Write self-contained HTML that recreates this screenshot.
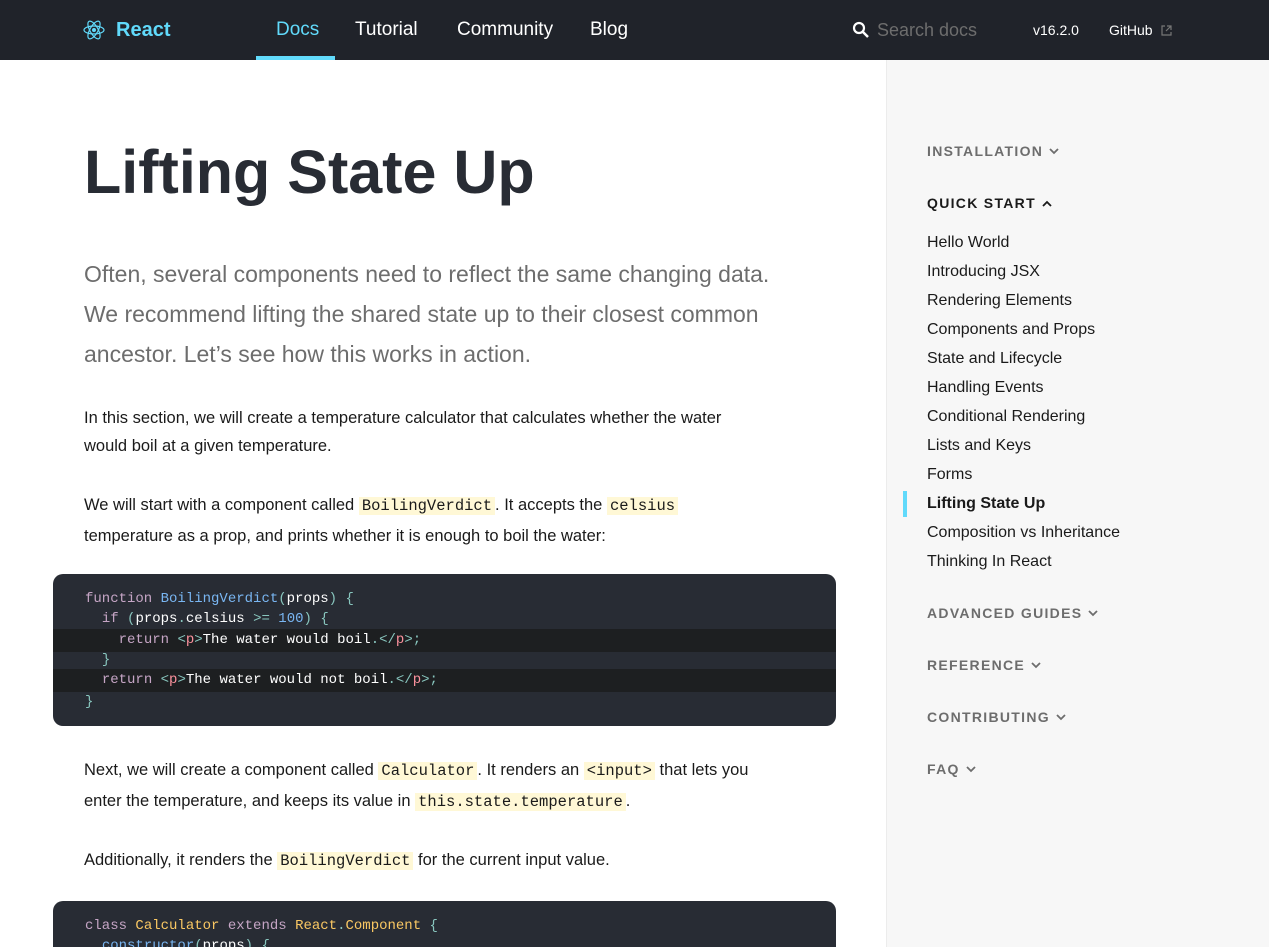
<!DOCTYPE html>
<html style="height:947px;overflow:hidden"><head><meta charset="utf-8"><style>
*{margin:0;padding:0;box-sizing:border-box}
body{width:1269px;height:947px;overflow:hidden;background:#fff;font-family:"Liberation Sans",sans-serif;position:relative}
.hdr{position:absolute;left:0;top:0;width:1269px;height:60px;background:#20232a}
.hdr .t{position:absolute;top:0;height:60px;line-height:60px;font-size:19px;color:#fff}
.side{position:absolute;left:886px;top:60px;width:383px;height:887px;background:#f7f7f7;border-left:1px solid #ececec}
.sh{position:absolute;left:40px;font-size:14px;font-weight:bold;letter-spacing:1.3px;color:#6d6d6d}
.sh svg{margin-left:6px;vertical-align:1px}
.si{position:absolute;left:40px;font-size:16px;color:#1a1a1a}
.p{position:absolute;left:84px;font-size:16.5px;color:#1a1a1a;line-height:28px}
code.i{font-family:"Liberation Mono",monospace;background:#fff8d6;color:#1a1a1a;font-size:15.5px;padding:0 3px}
.code{position:absolute;left:53px;width:783px;background:#282c34;border-radius:10px;font-family:"Liberation Mono",monospace;font-size:14px;color:#fff;overflow:hidden}
.code div{height:20px;line-height:20px;padding-left:32px;white-space:pre}
.hl{background:#1d1f21}
.k{color:#c5a5c5}.f{color:#79b6f2}.pu{color:#88c6be}.n{color:#79b6f2}.tg{color:#fc929e}.cl{color:#fac863}
</style></head><body>
<div class="hdr">
 <svg style="position:absolute;left:83px;top:19px" width="22" height="22" viewBox="-11 -11 22 22"><g fill="none" stroke="#61dafb" stroke-width="1.2"><ellipse rx="10" ry="4"/><ellipse rx="10" ry="4" transform="rotate(60)"/><ellipse rx="10" ry="4" transform="rotate(120)"/></g><circle r="2" fill="#61dafb"/></svg>
 <div class="t" style="left:116px;color:#61dafb;font-weight:bold;font-size:20px">React</div>
 <div class="t" style="left:276px;color:#61dafb">Docs</div>
 <div style="position:absolute;left:256px;top:56px;width:79px;height:4px;background:#61dafb"></div>
 <div class="t" style="left:355px">Tutorial</div>
 <div class="t" style="left:457px">Community</div>
 <div class="t" style="left:590px">Blog</div>
 <svg style="position:absolute;left:852px;top:21px" width="18" height="18" viewBox="0 0 18 18"><circle cx="7" cy="7" r="5" fill="none" stroke="#fff" stroke-width="2.2"/><path d="M11 11l5 5" stroke="#fff" stroke-width="2.5"/></svg>
 <div class="t" style="left:877px;color:#6d6d6d;font-size:18px">Search docs</div>
 <div class="t" style="left:1033px;font-size:14px">v16.2.0</div>
 <div class="t" style="left:1109px;font-size:14px">GitHub</div>
 <svg style="position:absolute;left:1161px;top:25px" width="11" height="11" viewBox="0 0 11 11"><path d="M4 1H1v9h9V7M6 1h4v4M10 1L5 6" fill="none" stroke="#777" stroke-width="1.2"/></svg>
</div>
<div style="position:absolute;left:84px;top:137px;font-size:61px;font-weight:bold;color:#282c34">Lifting State Up</div>
<div style="position:absolute;left:84px;top:254px;width:725px;font-size:23px;line-height:40px;color:#6d6d6d">Often, several components need to reflect the same changing data. We recommend lifting the shared state up to their closest common ancestor. Let’s see how this works in action.</div>
<div class="p" style="top:404px">In this section, we will create a temperature calculator that calculates whether the water<br>would boil at a given temperature.</div>
<div class="p" style="top:490px;line-height:30px">We will start with a component called <code class="i">BoilingVerdict</code>. It accepts the <code class="i">celsius</code><br>temperature as a prop, and prints whether it is enough to boil the water:</div>
<div class="code" style="top:574px;height:152px;padding-top:15px">
<div><span class="k">function</span> <span class="f">BoilingVerdict</span><span class="pu">(</span>props<span class="pu">) {</span></div>
<div>  <span class="k">if</span> <span class="pu">(</span>props<span class="pu">.</span>celsius <span class="pu">&gt;=</span> <span class="n">100</span><span class="pu">) {</span></div>
<div class="hl" style="height:23px;line-height:23px">    <span class="k">return</span> <span class="pu">&lt;</span><span class="tg">p</span><span class="pu">&gt;</span>The water would boil<span class="pu">.&lt;/</span><span class="tg">p</span><span class="pu">&gt;;</span></div>
<div style="height:17px;line-height:17px">  <span class="pu">}</span></div>
<div class="hl" style="height:23px;line-height:23px">  <span class="k">return</span> <span class="pu">&lt;</span><span class="tg">p</span><span class="pu">&gt;</span>The water would not boil<span class="pu">.&lt;/</span><span class="tg">p</span><span class="pu">&gt;;</span></div>
<div><span class="pu">}</span></div>
</div>
<div class="p" style="top:755px;line-height:30px">Next, we will create a component called <code class="i">Calculator</code>. It renders an <code class="i">&lt;input&gt;</code> that lets you<br>enter the temperature, and keeps its value in <code class="i">this.state.temperature</code>.</div>
<div class="p" style="top:845px;line-height:30px">Additionally, it renders the <code class="i">BoilingVerdict</code> for the current input value.</div>
<div class="code" style="top:901px;height:46px;padding-top:15px;border-radius:10px 10px 0 0">
<div><span class="k">class</span> <span class="cl">Calculator</span> <span class="k">extends</span> <span class="cl">React</span><span class="pu">.</span><span class="cl">Component</span> <span class="pu">{</span></div>
<div>  <span class="f">constructor</span><span class="pu">(</span>props<span class="pu">) {</span></div>
</div>
<div class="side">
 <div class="sh" style="top:83px">INSTALLATION<svg width="10" height="7" viewBox="0 0 10 7"><path d="M1 1l4 4 4-4" fill="none" stroke="#6d6d6d" stroke-width="1.8"/></svg></div>
 <div class="sh" style="top:135px;color:#1a1a1a">QUICK START<svg width="10" height="7" viewBox="0 0 10 7"><path d="M1 6l4-4 4 4" fill="none" stroke="#1a1a1a" stroke-width="1.8"/></svg></div>
 <div class="si" style="top:174px">Hello World</div>
 <div class="si" style="top:203px">Introducing JSX</div>
 <div class="si" style="top:232px">Rendering Elements</div>
 <div class="si" style="top:261px">Components and Props</div>
 <div class="si" style="top:290px">State and Lifecycle</div>
 <div class="si" style="top:319px">Handling Events</div>
 <div class="si" style="top:348px">Conditional Rendering</div>
 <div class="si" style="top:377px">Lists and Keys</div>
 <div class="si" style="top:406px">Forms</div>
 <div style="position:absolute;left:16px;top:431px;width:4px;height:26px;background:#61dafb"></div>
 <div class="si" style="top:435px;font-weight:bold">Lifting State Up</div>
 <div class="si" style="top:464px">Composition vs Inheritance</div>
 <div class="si" style="top:493px">Thinking In React</div>
 <div class="sh" style="top:545px">ADVANCED GUIDES<svg width="10" height="7" viewBox="0 0 10 7"><path d="M1 1l4 4 4-4" fill="none" stroke="#6d6d6d" stroke-width="1.8"/></svg></div>
 <div class="sh" style="top:597px">REFERENCE<svg width="10" height="7" viewBox="0 0 10 7"><path d="M1 1l4 4 4-4" fill="none" stroke="#6d6d6d" stroke-width="1.8"/></svg></div>
 <div class="sh" style="top:649px">CONTRIBUTING<svg width="10" height="7" viewBox="0 0 10 7"><path d="M1 1l4 4 4-4" fill="none" stroke="#6d6d6d" stroke-width="1.8"/></svg></div>
 <div class="sh" style="top:701px">FAQ<svg width="10" height="7" viewBox="0 0 10 7"><path d="M1 1l4 4 4-4" fill="none" stroke="#6d6d6d" stroke-width="1.8"/></svg></div>
</div>
</body></html>
